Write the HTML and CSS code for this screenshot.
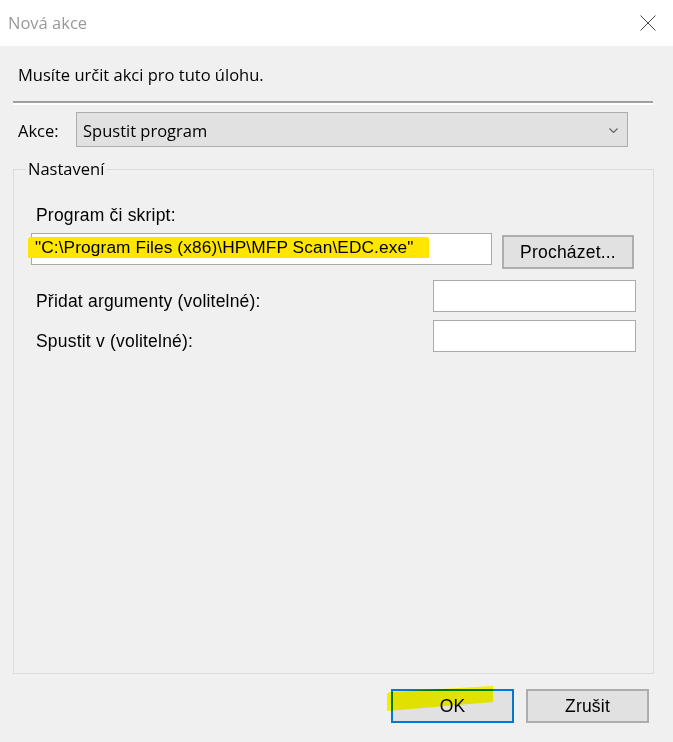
FILE: index.html
```html
<!DOCTYPE html>
<html lang="cs">
<head>
<meta charset="utf-8">
<title>Nová akce</title>
<link rel="stylesheet" href="styles.css">
</head>
<body>
<div class="window">
  <div class="titlebar">
    <span class="title">Nová akce</span>
    <svg class="close" width="16" height="16" viewBox="0 0 16 16"><path d="M0.5 0.5L15.5 15.5M15.5 0.5L0.5 15.5" stroke="#444" stroke-width="1" fill="none"/></svg>
  </div>
  <div class="content">
    <p class="intro">Musíte určit akci pro tuto úlohu.</p>
    <div class="sep"></div>
    <div class="action-row">
      <span class="action-label">Akce:</span>
      <div class="combo">
        <span>Spustit program</span>
        <svg class="chevron" width="9" height="5" viewBox="0 0 9 5"><path d="M0.5 0.5L4.5 4.5L8.5 0.5" fill="none" stroke="#666" stroke-width="1.2"/></svg>
      </div>
    </div>
    <fieldset class="group">
      <legend class="group-title">Nastavení</legend>
      <div class="field-label">Program či skript:</div>
      <div class="program-row">
        <div class="textbox path"><span class="hl">"C:\Program Files (x86)\HP\MFP Scan\EDC.exe"</span></div>
        <button class="btn browse">Procházet...</button>
      </div>
      <div class="opt-row">
        <span class="opt-label">Přidat argumenty (volitelné):</span>
        <div class="textbox opt"></div>
      </div>
      <div class="opt-row second">
        <span class="opt-label">Spustit v (volitelné):</span>
        <div class="textbox opt"></div>
      </div>
    </fieldset>
    <div class="buttons">
      <div class="ok-wrap">
        <button class="btn dlg ok">OK</button>
        <svg class="marker" width="112" height="30" viewBox="0 0 112 30"><path d="M2 10 Q3 8 6 8 L108 2 L108 18 L2 27 Z" fill="#ffff00"/></svg>
      </div>
      <button class="btn dlg">Zrušit</button>
    </div>
  </div>
</div>
</body>
</html>
```
FILE: styles.css
```css
html, body {
  margin: 0;
  padding: 0;
}
body {
  width: 673px;
  height: 742px;
  overflow: hidden;
  background: #f0f0f0;
  font-family: "Open Sans", "Noto Sans", sans-serif;
  font-size: 16.5px;
  color: #000;
}
.titlebar {
  height: 46px;
  box-sizing: border-box;
  background: #fff;
  display: flex;
  align-items: center;
  justify-content: space-between;
  padding: 0 17px 0 8px;
}
.title {
  color: #999;
  line-height: 24px;
}
.close {
  display: block;
}
.content {
  padding: 0 19px 0 13px;
}
.intro {
  margin: 0;
  padding: 17px 0 0 5px;
  line-height: 24px;
}
.sep {
  margin: 14px 1px 0 0;
  height: 0;
  border-top: 2px solid #a0a0a0;
  border-bottom: 2px solid #fff;
}
.action-row {
  display: flex;
  align-items: center;
  margin-top: 7px;
  padding-left: 5px;
}
.action-label {
  width: 58px;
  padding-top: 2px;
}
.combo {
  width: 552px;
  height: 35px;
  box-sizing: border-box;
  border: 1px solid #adadad;
  background: #e1e1e1;
  display: flex;
  align-items: center;
  justify-content: space-between;
  padding: 2px 9px 0 6px;
}
.chevron {
  display: block;
}
.group {
  margin: 11px 0 0 0;
  padding: 0;
  border: 1px solid #dcdcdc;
  min-width: 0;
  height: 516px;
  box-sizing: border-box;
}
.group-title {
  margin-left: 12px;
  padding: 0 2px;
  line-height: 22px;
}
.field-label,
.opt-label,
.hl,
.btn {
  font-family: "Liberation Sans", Arial, sans-serif;
  font-size: 17.5px;
  letter-spacing: 0.2px;
}
.field-label {
  margin: 25px 0 0 22px;
  line-height: 20px;
}
.program-row {
  display: flex;
  align-items: flex-start;
  margin: 8px 0 0 17px;
}
.textbox {
  box-sizing: border-box;
  border: 1px solid #aaa;
  background: #fff;
  height: 32px;
}
.textbox.path {
  width: 461px;
  padding: 1px 0 0 3px;
}
.hl {
  display: inline-block;
  background: #ffe600;
  margin-left: -7px;
  padding: 0 16px 0 7px;
  line-height: 21px;
  font-size: 17.3px;
  letter-spacing: 0.1px;
  border-radius: 3px 2px 0 0;
  white-space: nowrap;
}
.btn {
  box-sizing: border-box;
  border: 2px solid #adadad;
  background: #e1e1e1;
  color: #000;
  padding: 0;
  margin: 0;
}
.browse {
  width: 132px;
  height: 34px;
  margin: 2px 0 0 10px;
}
.opt-row {
  display: flex;
  justify-content: space-between;
  align-items: flex-start;
  margin: 11px 17px 0 22px;
}
.opt-row.second {
  margin-top: 8px;
}
.opt-label {
  margin-top: 11px;
  line-height: 20px;
}
.textbox.opt {
  width: 203px;
}
.buttons {
  display: flex;
  justify-content: flex-end;
  gap: 12px;
  margin: 15px 5px 0 0;
}
.dlg {
  width: 123px;
  height: 34px;
}
.ok {
  border-color: #0078d7;
}
.ok-wrap {
  position: relative;
}
.marker {
  position: absolute;
  left: -6px;
  top: -5px;
  mix-blend-mode: multiply;
  pointer-events: none;
}
```
